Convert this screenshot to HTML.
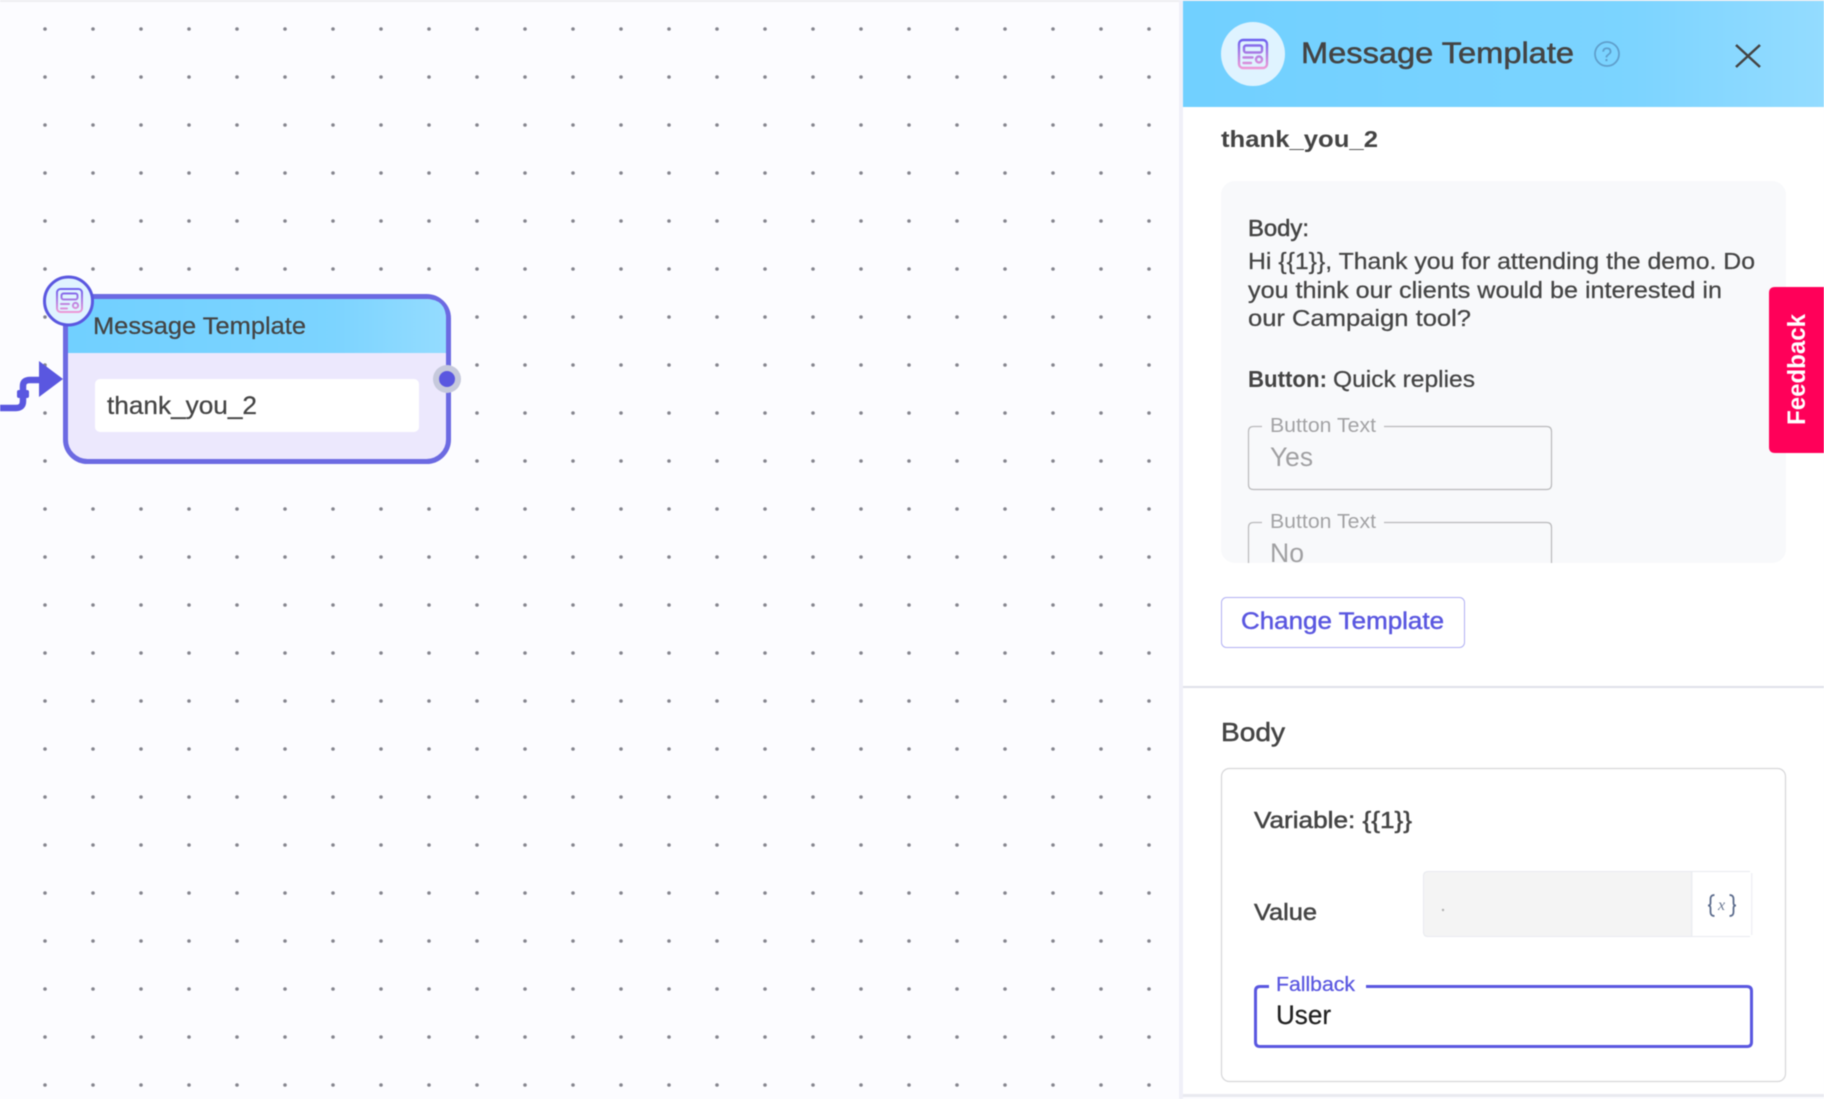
<!DOCTYPE html>
<html lang="en"><head><meta charset="utf-8"><title>Message Template</title>
<style>
html,body{margin:0;padding:0;width:1824px;height:1099px;overflow:hidden;background:#fcfcff}
svg{display:block;position:absolute;left:0;top:0;filter:blur(.5px)}
text{font-family:"Liberation Sans",sans-serif;fill:#444;stroke:#444;stroke-width:.25px}
.m{stroke:#444;stroke-width:.5px}
.b{font-weight:700;stroke-width:0}
</style></head><body>
<svg width="1824" height="1099" viewBox="0 0 1824 1099" xmlns="http://www.w3.org/2000/svg">
<defs>
<pattern id="dots" x="21" y="5" width="48" height="48" patternUnits="userSpaceOnUse"><circle cx="24" cy="24" r="1.8" fill="#85858e"/></pattern>
<linearGradient id="hd" x1="0" y1="0" x2="1" y2="0"><stop offset="0" stop-color="#71d0ff"/><stop offset=".7" stop-color="#7cd4ff"/><stop offset="1" stop-color="#94dcff"/></linearGradient>
<linearGradient id="ic1" gradientUnits="userSpaceOnUse" x1="0" y1="39" x2="0" y2="69"><stop offset="0" stop-color="#6a5ff0"/><stop offset="1" stop-color="#f29ad6"/></linearGradient>
<linearGradient id="ic2" gradientUnits="userSpaceOnUse" x1="0" y1="288" x2="0" y2="313"><stop offset="0" stop-color="#6a5ff0"/><stop offset="1" stop-color="#f29ad6"/></linearGradient>
<clipPath id="box"><rect x="1221" y="181" width="565" height="382"/></clipPath>
</defs>

<rect width="1824" height="1099" fill="#fcfcff"/>
<rect width="1824" height="2" fill="#eeeef2"/>
<rect x="0" y="0" width="1180" height="1099" fill="url(#dots)"/>

<!-- connector -->
<path d="M0 408H16Q23 408 23 401V386Q23 380 30 380H42" fill="none" stroke="#5a57e0" stroke-width="6.500"/>
<rect x="17" y="390" width="12" height="8" rx="2" fill="#5a57e0"/>
<path d="M39 361L63 379L39 397Z" fill="#5a57e0"/>

<!-- node -->
<rect x="65.500" y="296.500" width="383" height="165" rx="22" fill="#ece8fd" stroke="#6c6ae2" stroke-width="5"/>
<path d="M68 353V299H426Q446 299 446 319V353Z" fill="url(#hd)"/>
<rect x="95" y="379" width="324" height="53" rx="5" fill="#fff"/>
<text x="93" y="334" font-size="24" textLength="213" lengthAdjust="spacingAndGlyphs">Message Template</text>
<text x="107" y="414" font-size="25" textLength="150" lengthAdjust="spacingAndGlyphs">thank_you_2</text>
<circle cx="447" cy="379" r="14" fill="#c6c9dc"/>
<circle cx="447" cy="379" r="8" fill="#5a57e0"/>
<circle cx="68.500" cy="301" r="24" fill="#dff3ff" stroke="#5a57e0" stroke-width="3"/>
<g fill="none" stroke="url(#ic2)" stroke-width="2" stroke-linecap="round">
<rect x="57" y="289" width="25" height="23" rx="3.500"/>
<rect x="61.500" y="293.500" width="16" height="6" rx="2"/>
<path d="M61 304H69M61 308.500H67"/>
<circle cx="75.500" cy="305.500" r="2.600"/>
</g>

<!-- panel -->
<rect x="1179" y="0" width="4" height="1099" fill="#f0f0f8"/>
<rect x="1183" y="1094" width="641" height="3" fill="#e9eaf0"/>
<rect x="1183" y="1" width="641" height="1093" fill="#fff"/>
<rect x="1183" y="1" width="641" height="106" fill="url(#hd)"/>
<circle cx="1253" cy="54" r="32" fill="#dff3ff"/>
<g fill="none" stroke="url(#ic1)" stroke-width="2.400" stroke-linecap="round">
<rect x="1239" y="40" width="28" height="28" rx="4"/>
<rect x="1244" y="45.500" width="18" height="7" rx="2"/>
<path d="M1243.500 57.500H1252.500M1243.500 63H1251"/>
<circle cx="1259" cy="59.500" r="3"/>
</g>
<text x="1301" y="63" font-size="29.500" class="m" textLength="273" lengthAdjust="spacingAndGlyphs">Message Template</text>
<circle cx="1607" cy="54" r="12" fill="none" stroke="#5f9fcc" stroke-width="1.800"/>
<text x="1601.500" y="61" font-size="19" style="fill:#5f9fcc;stroke:#5f9fcc">?</text>
<path d="M1736 45L1760 67M1760 45L1736 67" stroke="#444" stroke-width="2.500" fill="none"/>

<text x="1221" y="147" font-size="23.500" class="b" textLength="157" lengthAdjust="spacingAndGlyphs">thank_you_2</text>

<rect x="1221" y="181" width="565" height="382" rx="14" fill="#f8f9fb"/>
<text x="1248" y="236" font-size="23" class="m" textLength="61" lengthAdjust="spacingAndGlyphs">Body:</text>
<text x="1248" y="269" font-size="23" textLength="507" lengthAdjust="spacingAndGlyphs">Hi {{1}}, Thank you for attending the demo. Do</text>
<text x="1248" y="298" font-size="23" textLength="474" lengthAdjust="spacingAndGlyphs">you think our clients would be interested in</text>
<text x="1248" y="326" font-size="23" textLength="223" lengthAdjust="spacingAndGlyphs">our Campaign tool?</text>
<text x="1248" y="387" font-size="23" class="b" textLength="79" lengthAdjust="spacingAndGlyphs">Button:</text>
<text x="1333" y="387" font-size="23" textLength="142" lengthAdjust="spacingAndGlyphs">Quick replies</text>

<path d="M1262 426.500H1253.500Q1248.500 426.500 1248.500 431.500V484.500Q1248.500 489.500 1253.500 489.500H1546.500Q1551.500 489.500 1551.500 484.500V431.500Q1551.500 426.500 1546.500 426.500H1384" fill="none" stroke="#b9b9bb" stroke-width="1.200"/>
<text x="1270" y="432" font-size="20" style="fill:#a3a3a5;stroke-width:0" textLength="106" lengthAdjust="spacingAndGlyphs">Button Text</text>
<text x="1270" y="466" font-size="27" style="fill:#a0a0a2;stroke-width:0" textLength="43" lengthAdjust="spacingAndGlyphs">Yes</text>
<g clip-path="url(#box)">
<path d="M1262 522.500H1253.500Q1248.500 522.500 1248.500 527.500V580M1551.500 580V527.500Q1551.500 522.500 1546.500 522.500H1384" fill="none" stroke="#b9b9bb" stroke-width="1.200"/>
<text x="1270" y="528" font-size="20" style="fill:#a3a3a5;stroke-width:0" textLength="106" lengthAdjust="spacingAndGlyphs">Button Text</text>
<text x="1270" y="562" font-size="27" style="fill:#a0a0a2;stroke-width:0" textLength="34" lengthAdjust="spacingAndGlyphs">No</text>
</g>

<rect x="1221.500" y="597.500" width="243" height="50" rx="5" fill="#fff" stroke="#b2b1f3" stroke-width="1"/>
<text x="1241" y="629" font-size="24" style="fill:#5a57e0;stroke:#5a57e0;stroke-width:.45px" textLength="203" lengthAdjust="spacingAndGlyphs">Change Template</text>

<rect x="1183" y="686" width="641" height="2" fill="#dfe1ea"/>

<text x="1221" y="741" font-size="26" class="m" textLength="64" lengthAdjust="spacingAndGlyphs">Body</text>
<rect x="1221.500" y="768.500" width="564" height="313" rx="8" fill="#fff" stroke="#d6d6d8" stroke-width="1.200"/>
<text x="1254" y="828" font-size="23" class="m" textLength="158" lengthAdjust="spacingAndGlyphs">Variable: {{1}}</text>
<text x="1254" y="920" font-size="23" class="m" textLength="63" lengthAdjust="spacingAndGlyphs">Value</text>

<path d="M1692 871H1428Q1423 871 1423 876V932Q1423 937 1428 937H1692Z" fill="#f4f4f4"/>
<path d="M1423.500 932V876Q1423.500 871.500 1428 871.500H1750M1423.500 932Q1423.500 936.500 1428 936.500H1750" fill="none" stroke="#e8eaf0" stroke-width="1"/>
<rect x="1691" y="872" width="1.500" height="64" fill="#eceef2"/>
<rect x="1751" y="873" width="1.500" height="62" fill="#f0f1f5"/>
<circle cx="1443" cy="910" r="1.200" fill="#b0b0b0"/>
<path d="M1714.500 895Q1710.500 895 1710.500 899V903Q1710.500 905.500 1708 905.500Q1710.500 905.500 1710.500 908V912Q1710.500 916 1714.500 916M1729.500 895Q1733.500 895 1733.500 899V903Q1733.500 905.500 1736 905.500Q1733.500 905.500 1733.500 908V912Q1733.500 916 1729.500 916" fill="none" stroke="#5b6b8c" stroke-width="1.800"/>
<text x="1718" y="910" font-size="16" style="font-family:'Liberation Serif',serif;font-style:italic;fill:#6a7892;stroke-width:0">x</text>

<path d="M1269 986.500H1260Q1255.500 986.500 1255.500 991V1042Q1255.500 1046.500 1260 1046.500H1747Q1751.500 1046.500 1751.500 1042V991Q1751.500 986.500 1747 986.500H1366" fill="none" stroke="#5a57e0" stroke-width="3"/>
<text x="1276" y="991" font-size="20.500" style="fill:#5a57e0;stroke:#5a57e0" textLength="79" lengthAdjust="spacingAndGlyphs">Fallback</text>
<text x="1276" y="1024" font-size="27" style="fill:#222;stroke:#222" textLength="55" lengthAdjust="spacingAndGlyphs">User</text>

<!-- feedback -->
<path d="M1824 287H1775Q1769 287 1769 293V447Q1769 453 1775 453H1824Z" fill="#ff0059"/>
<text transform="translate(1805 425) rotate(-90)" font-size="25" class="b" style="fill:#fff" textLength="111" lengthAdjust="spacingAndGlyphs">Feedback</text>
</svg>
</body></html>
